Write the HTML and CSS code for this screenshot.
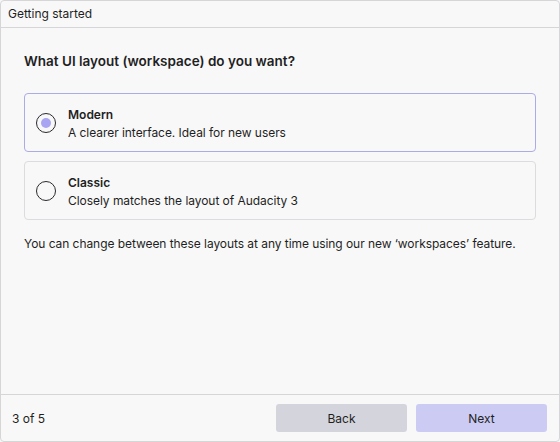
FILE: index.html
```html
<!DOCTYPE html>
<html>
<head>
<meta charset="utf-8">
<link rel="stylesheet" href="styles.css">
</head>
<body>
<div class="window">
  <div class="titlebar">Getting started</div>
  <div class="content">
    <h1 class="heading">What UI layout (workspace) do you want?</h1>
    <div class="options">
      <div class="option selected">
        <span class="radio"><span class="dot"></span></span>
        <div class="option-text">
          <div class="option-title">Modern</div>
          <div class="option-desc">A clearer interface. Ideal for new users</div>
        </div>
      </div>
      <div class="option">
        <span class="radio"></span>
        <div class="option-text">
          <div class="option-title">Classic</div>
          <div class="option-desc">Closely matches the layout of Audacity 3</div>
        </div>
      </div>
    </div>
    <p class="note">You can change between these layouts at any time using our new ‘workspaces’ feature.</p>
  </div>
  <div class="footer">
    <span class="step">3 of 5</span>
    <div class="buttons">
      <button class="btn back">Back</button>
      <button class="btn next">Next</button>
    </div>
  </div>
</div>
</body>
</html>
```
FILE: styles.css
```css
* { box-sizing: border-box; }
html, body { margin: 0; padding: 0; }
body {
  width: 560px;
  height: 442px;
  font-family: Inter, "Noto Sans", sans-serif;
  color: #1f1f23;
  background: #f8f8f9;
}
.window {
  width: 560px;
  height: 442px;
  border: 1px solid #d6d6d9;
  border-radius: 4px;
  background: #f8f8f9;
  display: flex;
  flex-direction: column;
}
.titlebar {
  height: 27px;
  border-bottom: 1px solid #d6d6d9;
  padding-left: 7px;
  font-size: 12px;
  line-height: 26px;
  color: #1f1f23;
}
.content {
  flex: 1;
  padding: 24px 23px 0 23px;
}
.heading {
  margin: 0;
  font-size: 13.5px;
  font-weight: 600;
  line-height: 18px;
}
.options {
  margin-top: 23px;
  display: flex;
  flex-direction: column;
  gap: 9px;
}
.option {
  height: 59px;
  border: 1px solid #dcdce0;
  border-radius: 4px;
  display: flex;
  align-items: center;
  padding-left: 11px;
  gap: 12px;
}
.option.selected { border-color: #ababe6; }
.radio {
  width: 20px;
  height: 20px;
  border: 1px solid #2a2a2e;
  border-radius: 50%;
  display: flex;
  align-items: center;
  justify-content: center;
  flex: none;
}
.dot {
  width: 10px;
  height: 10px;
  border-radius: 50%;
  background: #a8a5f2;
}
.option-text { display: flex; flex-direction: column; gap: 3px; padding-top: 1px; }
.option-title { font-size: 12px; font-weight: 600; line-height: 15px; }
.option-desc { font-size: 12px; line-height: 15px; letter-spacing: -0.05px; }
.note {
  margin: 16px 0 0 0;
  font-size: 12px;
  line-height: 15px;
  letter-spacing: -0.06px;
}
.footer {
  height: 47px;
  border-top: 1px solid #d6d6d9;
  display: flex;
  align-items: center;
  justify-content: space-between;
  padding: 0 12px 0 11px;
}
.step { font-size: 12px; }
.buttons { display: flex; gap: 9px; }
.btn {
  width: 131px;
  height: 28px;
  border: none;
  border-radius: 3px;
  font-family: inherit;
  font-size: 12px;
  color: #1f1f23;
}
.back { background: #d4d5dc; }
.next { background: #cccbf3; }
```
